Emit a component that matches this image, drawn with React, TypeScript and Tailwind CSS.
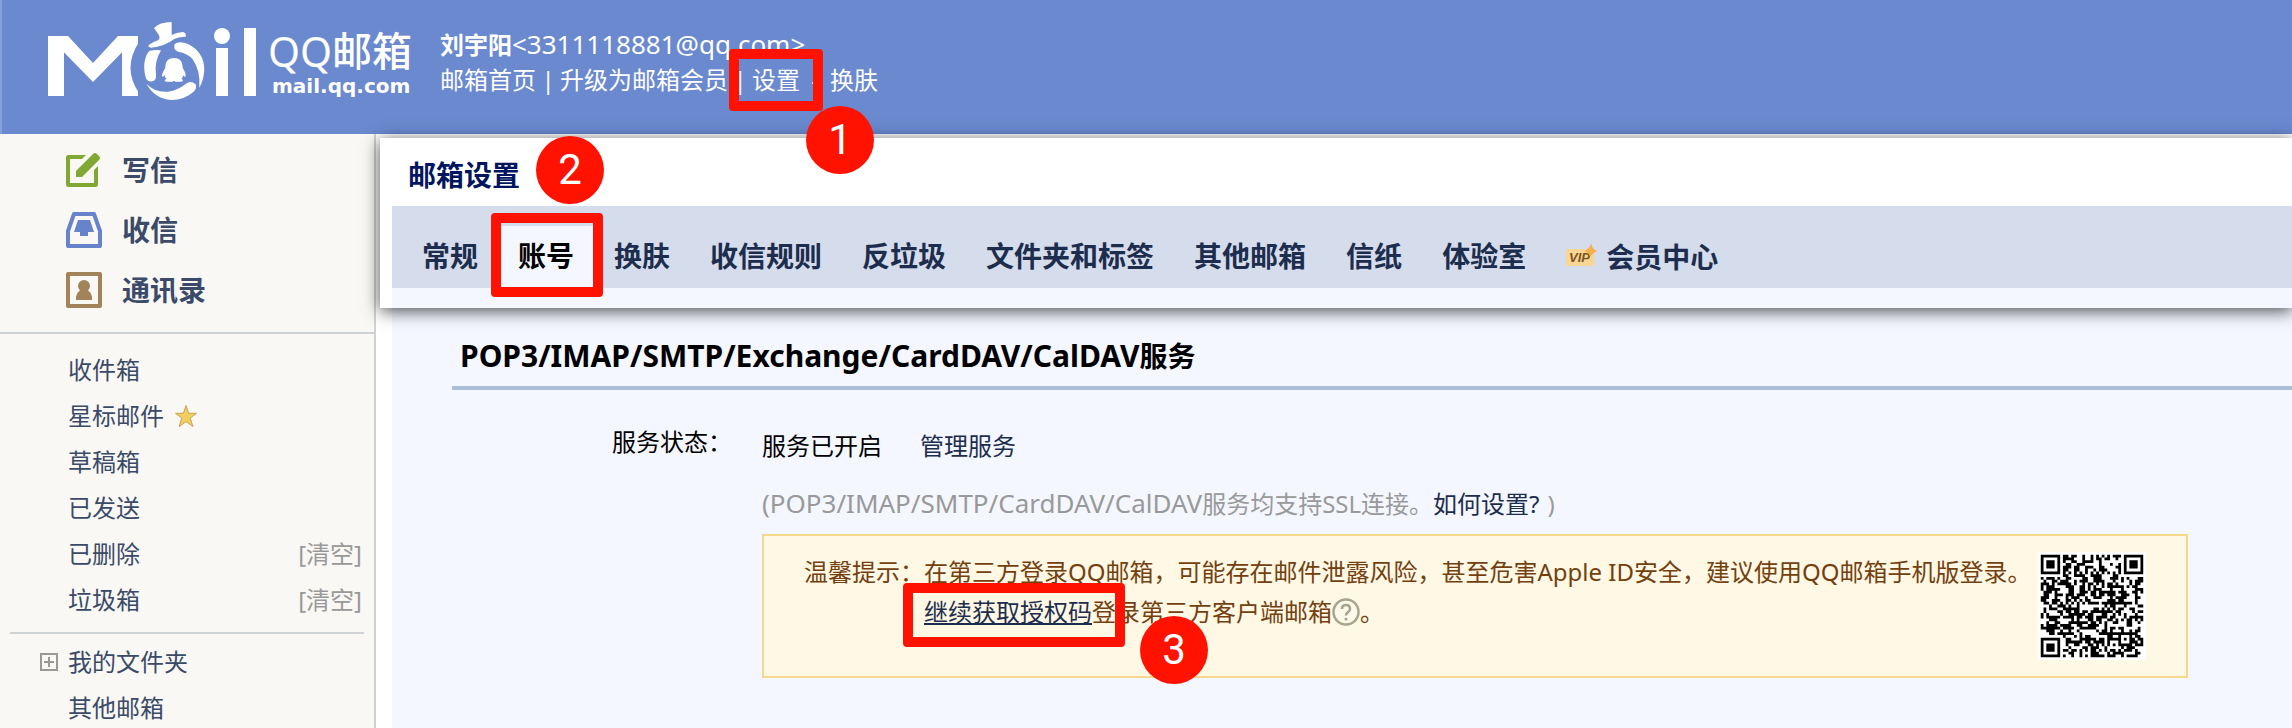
import React from "react";

const CELLS = 37;

function inFinder(x: number, y: number): boolean | null {
  const corners = [
    [0, 0],
    [CELLS - 7, 0],
    [0, CELLS - 7],
  ];
  for (const [cx, cy] of corners) {
    const dx = x - cx;
    const dy = y - cy;
    if (dx >= -1 && dx <= 7 && dy >= -1 && dy <= 7) {
      const d = Math.max(Math.abs(dx - 3), Math.abs(dy - 3));
      return d === 3 || d <= 1;
    }
  }
  return null;
}

function isDark(x: number, y: number): boolean {
  const finder = inFinder(x, y);
  if (finder !== null) return finder;
  const d = Math.max(Math.abs(x - 30), Math.abs(y - 30));
  if (d <= 2) return d !== 1;
  if (x === 6) return y % 2 === 0;
  if (y === 6) return x % 2 === 0;
  let h = (x * 374761393 + y * 668265263) | 0;
  h = Math.imul(h ^ (h >>> 13), 1274126177);
  return (((h ^ (h >>> 16)) >>> 0) % 100) < 52;
}

function QrCode() {
  let d = "";
  for (let y = 0; y < CELLS; y++) {
    for (let x = 0; x < CELLS; x++) {
      if (isDark(x, y)) d += `M${x} ${y}h1v1h-1z`;
    }
  }
  return (
    <svg viewBox="-1 -1 39 39" className="h-[108px] w-[108px] shrink-0 bg-white" role="img" aria-label="QQ邮箱手机版">
      <path d={d} fill="#000" />
    </svg>
  );
}

function Logo() {
  return (
    <svg viewBox="0 0 208 84" width="208" height="84" fill="#fff" aria-hidden="true">
      <g transform="translate(-48 -20)">
        <rect x="48" y="36" width="16" height="60" />
        <rect x="122" y="36" width="16" height="60" />
        <path d="M48 36H68L93 63L118 36H138V36L93 82Z" />
        <path d="M139 42Q122 68 139 93Z" fill="#6a89cf" />
        <circle cx="222" cy="36" r="8" />
        <rect x="216" y="48" width="12" height="48" />
        <rect x="244" y="28" width="12" height="68" />
      </g>
      <g transform="translate(88 -4) scale(.3333)">
        <path d="M54 36Q70 18 107 18V57Q122 49 140 48Q152 50 149 62Q130 62 116 68Q84 92 45 95Q35 94 38 87Q48 79 66 73Q74 66 68 56Z" />
        <path d="M42 104Q58 101 75 103Q54 138 60 176Q62 192 50 196Q36 198 30 188Q18 146 32 116Q36 107 42 104Z" />
        <path d="M116 84Q130 74 156 84Q204 108 205 160Q203 194 190 215Q194 164 170 130Q156 112 126 107Q110 100 116 84Z" />
        <path d="M31 203Q56 230 96 227Q126 222 150 203Q165 192 179 205Q184 218 172 228Q145 252 106 252Q56 248 31 203Z" />
        <path d="M114 126C133 126 140 138 140 155C144 162 150 172 149 181C146 184 144 181 141 177C141 182 139 186 136 189C143 191 142 197 136 197H118L114 194L110 197H92C84 197 84 191 92 189C88 186 87 182 86 177C83 182 80 183 78 181C78 172 84 162 88 155C88 138 95 126 114 126Z" />
      </g>
    </svg>
  );
}

function WriteIcon() {
  return (
    <svg viewBox="0 0 36 36" width="36" height="36" aria-hidden="true">
      <path d="M20 3H2.500Q0 3 0 5V32Q0 35 2.500 35H29.500Q32 35 32 32V14L28 18V31H4V7H16Z" fill="#82a834" />
      <path d="M10 19L27 2Q29 0 31 2L33 4Q35 6 33 8L16 25H10Z" fill="#82a834" />
    </svg>
  );
}

function InboxIcon() {
  return (
    <svg viewBox="0 0 36 36" width="36" height="36" aria-hidden="true">
      <path d="M8 2H28L34 19V34H2V19Z" fill="none" stroke="#6683cb" strokeWidth="4" strokeLinejoin="round" />
      <path d="M12 8H24L28 20H22V24H14V20H8Z" fill="#6683cb" />
    </svg>
  );
}

function ContactsIcon() {
  return (
    <svg viewBox="0 0 36 36" width="36" height="36" aria-hidden="true">
      <rect x="2" y="2" width="32" height="32" fill="none" stroke="#a3845a" strokeWidth="4" strokeLinejoin="round" />
      <circle cx="18" cy="14" r="6" fill="#a3845a" />
      <path d="M10 28V25Q11 19 16 18H20Q25 19 26 25V28Z" fill="#a3845a" />
    </svg>
  );
}

function StarIcon() {
  return (
    <svg viewBox="0 0 24 24" width="24" height="24" aria-hidden="true">
      <path d="M12 1.500L14.600 9.300H22.500L16.200 14L18.900 22.500L12 17.600L5.100 22.500L7.800 14L1.500 9.300H9.400Z" fill="#f0cf5c" stroke="#cf9f55" strokeWidth="1" />
    </svg>
  );
}

function VipIcon() {
  return (
    <svg viewBox="0 0 32 28" width="32" height="28" aria-hidden="true">
      <rect x="0" y="6" width="28" height="17" rx="2" fill="#f9d694" />
      <text x="3" y="19" fontFamily="Liberation Sans" fontSize="13" fontWeight="700" fontStyle="italic" fill="#7a5420">VIP</text>
      <path d="M25 0Q26 6 31 8Q26 10 24 14Q23 9 18 8Q24 6 25 0Z" fill="#f3b04c" />
    </svg>
  );
}

function HelpIcon() {
  return (
    <svg viewBox="0 0 28 28" width="28" height="28" aria-hidden="true">
      <circle cx="14" cy="14" r="12.500" fill="#fdf9ea" stroke="#a6a58d" strokeWidth="2.500" />
      <path d="M10 11Q10 7 14 7T18 11Q18 13 16 14.200T14 17.500" fill="none" stroke="#a6a58d" strokeWidth="2.600" />
      <circle cx="14" cy="21" r="1.600" fill="#a6a58d" />
    </svg>
  );
}

const mainActions = [
  { label: "写信", icon: <WriteIcon /> },
  { label: "收信", icon: <InboxIcon /> },
  { label: "通讯录", icon: <ContactsIcon /> },
];

const folders = [
  { label: "收件箱" },
  { label: "星标邮件", star: true },
  { label: "草稿箱" },
  { label: "已发送" },
  { label: "已删除", clear: true },
  { label: "垃圾箱", clear: true },
];

const tabs = ["常规", "账号", "换肤", "收信规则", "反垃圾", "文件夹和标签", "其他邮箱", "信纸", "体验室"];

function Header() {
  return (
    <header className="flex h-[134px] shrink-0 items-start border-l-2 border-[#86a0da] bg-[#6a89cf] text-2xl text-white">
      <a href="#home" className="flex pt-5 pl-[46px]" aria-label="QQ邮箱">
        <Logo />
        <span className="flex w-[146px] flex-col pt-2 pl-3">
          <span className="flex h-[46px] items-center whitespace-nowrap leading-[46px]">
            <span className="text-[41px] font-normal">QQ</span>
            <span className="text-[40px] font-medium">邮箱</span>
          </span>
          <span className="pl-1 font-['DejaVu_Sans'] text-[20px] leading-[24px] font-bold">mail.qq.com</span>
        </span>
      </a>
      <div className="pt-[26px] pl-[38px] leading-[36px] whitespace-nowrap">
        <div className="h-9">
          <strong className="font-bold">刘宇阳</strong>
          <span className="text-[26px]">&lt;3311118881@qq.com&gt;</span>
        </div>
        <nav className="flex h-9">
          <a href="#home">邮箱首页</a>
          <span className="w-6 text-center">|</span>
          <a href="#upgrade">升级为邮箱会员</a>
          <span className="w-6 text-center">|</span>
          <a href="#settings">设置</a>
          <span className="w-[30px] text-center">-</span>
          <a href="#skin">换肤</a>
        </nav>
      </div>
    </header>
  );
}

function Sidebar() {
  return (
    <aside className="flex w-[376px] shrink-0 flex-col border-r-2 border-[#d0d3d5] bg-[#f9f8f4] text-2xl text-[#3a4a68]">
      <nav className="border-b-2 border-[#d0d3d5] pt-[6px] pb-3 text-[28px] font-bold">
        {mainActions.map((item) => (
          <a key={item.label} href="#action" className="flex h-[60px] items-center gap-5 pl-[66px] leading-[60px]">
            {item.icon}
            <span>{item.label}</span>
          </a>
        ))}
      </nav>
      <ul className="pt-[13px] leading-[46px]">
        {folders.map((folder) => (
          <li key={folder.label} className="flex h-[46px] items-center pr-3 pl-[68px]">
            <a href="#folder" className="flex items-center gap-[10px]">
              {folder.label}
              {folder.star && <StarIcon />}
            </a>
            {folder.clear && (
              <button type="button" className="ml-auto text-[#999]">
                [清空]
              </button>
            )}
          </li>
        ))}
      </ul>
      <hr className="mx-[10px] mt-[9px] border-t-2 border-[#d0d3d5]" />
      <ul className="pt-[5px] leading-[46px]">
        <li className="flex h-[46px] items-center gap-[10px] pl-10">
          <button type="button" aria-label="展开" className="flex">
            <svg viewBox="0 0 18 18" width="18" height="18" fill="none" stroke="#999" strokeWidth="2">
              <rect x="1" y="1" width="16" height="16" />
              <path d="M4 9H14M9 4V14" />
            </svg>
          </button>
          <a href="#folder">我的文件夹</a>
        </li>
        <li className="flex h-[46px] items-center pl-[68px]">
          <a href="#folder">其他邮箱</a>
        </li>
      </ul>
    </aside>
  );
}

function SettingsCard() {
  return (
    <section className="relative h-[170px] bg-white pl-3 shadow-[0_3px_16px_rgba(0,0,0,0.7)]">
      <h1 className="h-[68px] pl-4 text-[28px] leading-[74px] font-bold text-[#001560]">邮箱设置</h1>
      <nav className="flex h-[82px] items-end bg-[#d5dceb] pl-[10px] text-[28px] leading-[60px] font-bold whitespace-nowrap text-[#1d2d4e]">
        {tabs.map((tab) => (
          <a
            key={tab}
            href="#tab"
            className={tab === "账号" ? "h-[62px] bg-[#f4f7ff] px-5 text-black" : "h-[62px] px-5"}
          >
            {tab}
          </a>
        ))}
        <a href="#vip" className="flex h-[62px] items-center gap-2 px-5">
          <VipIcon />
          会员中心
        </a>
      </nav>
      <div className="h-5 bg-[#f4f7ff]" />
    </section>
  );
}

function AccountPanel() {
  return (
    <section className="ml-3 flex-1 bg-[#f4f7ff] pl-[60px] text-2xl whitespace-nowrap text-black">
      <h2 className="h-[82px] border-b-4 border-[#aabddb] pt-[26px] pl-2 text-[28px] leading-[44px] font-bold">
        <span className="text-[30px]">POP3/IMAP/SMTP/Exchange/CardDAV/CalDAV</span>服务
      </h2>
      <div className="flex pt-[34px]">
        <div className="w-[310px] pl-40 leading-[36px]">服务状态：</div>
        <div className="w-[1426px]">
          <p className="flex gap-[38px] pt-1 leading-[36px]">
            <span>服务已开启</span>
            <a href="#manage" className="text-[#1d2d4e]">
              管理服务
            </a>
          </p>
          <p className="h-[58px] pt-[21px] leading-[36px] text-[#999]">
            <span className="text-[26px]">(POP3/IMAP/SMTP/CardDAV/CalDAV</span>服务均支持SSL连接。
            <a href="#how" className="text-[#1d2d4e]">
              如何设置?
            </a>
            <span className="pl-2">)</span>
          </p>
          <div className="mt-3 flex h-[144px] justify-between border-2 border-[#f5d98a] bg-[#fef8e4] pt-4 pr-10 pl-10 leading-10 text-[#74400f]">
            <div className="flex">
              <span>温馨提示：</span>
              <div>
                <p>在第三方登录QQ邮箱，可能存在邮件泄露风险，甚至危害Apple ID安全，建议使用QQ邮箱手机版登录。</p>
                <p className="flex items-center">
                  <a href="#code" className="text-[#1d2d4e] underline">
                    继续获取授权码
                  </a>
                  登录第三方客户端邮箱
                  <HelpIcon />。
                </p>
              </div>
            </div>
            <QrCode />
          </div>
        </div>
      </div>
    </section>
  );
}

const stepCircle =
  "absolute flex h-[68px] w-[68px] items-center justify-center rounded-full bg-[#ff1200] font-['Roboto','Liberation_Sans',sans-serif] text-[42px] leading-none text-white";
const stepBox = "absolute rounded-[4px] border-[10px] border-[#ff1200]";

function Annotations() {
  return (
    <div className="pointer-events-none absolute inset-0 z-20">
      <div className={`${stepBox} top-[49px] left-[729px] h-[62px] w-[94px]`} />
      <div className={`${stepCircle} top-[106px] left-[806px]`}>1</div>
      <div className={`${stepBox} top-[213px] left-[491px] h-[84px] w-[112px]`} />
      <div className={`${stepCircle} top-[136px] left-[536px]`}>2</div>
      <div className={`${stepBox} top-[583px] left-[903px] h-[64px] w-[222px]`} />
      <div className={`${stepCircle} top-[616px] left-[1140px]`}>3</div>
    </div>
  );
}

export default function App() {
  return (
    <div className="relative flex h-screen flex-col overflow-hidden bg-white font-['Noto_Sans','Noto_Sans_CJK_SC',sans-serif]">
      <Header />
      <div className="flex min-h-0 flex-1">
        <Sidebar />
        <main className="relative flex min-w-0 flex-1 flex-col pt-1 pl-1">
          <SettingsCard />
          <AccountPanel />
        </main>
      </div>
      <Annotations />
    </div>
  );
}
